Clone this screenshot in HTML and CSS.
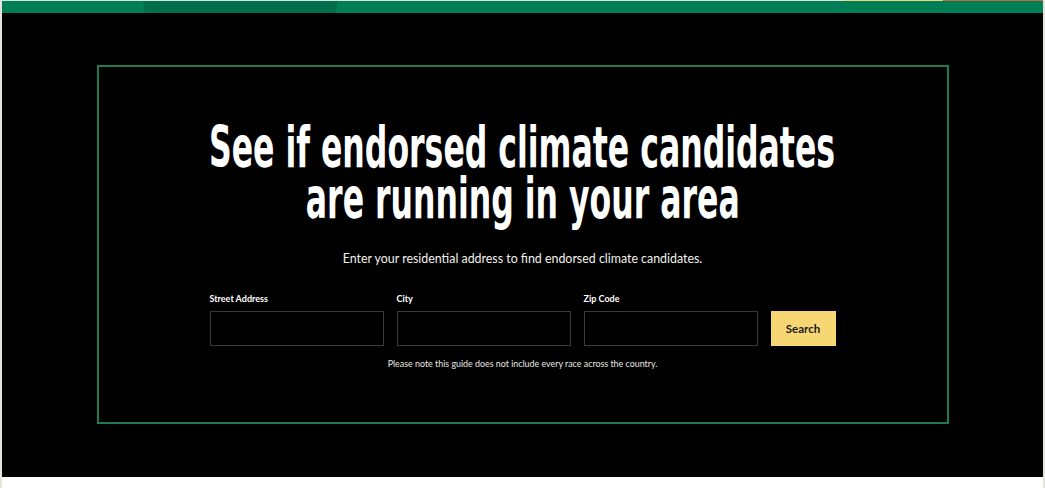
FILE: index.html
```html
<!DOCTYPE html>
<html lang="en">
<head>
  <meta charset="UTF-8" />
  <meta name="viewport" content="width=device-width, initial-scale=1.0" />
  <title>Find Climate Candidates</title>
  <link rel="stylesheet" href="styles.css">
</head>
<body>
  <div class="page">
    <!-- Top colour strip -->
    <div class="topline"></div>
    <div class="topbar">
      <span class="seg seg-a"></span>
      <span class="seg seg-b"></span>
      <span class="seg seg-c"></span>
    </div>

    <!-- Candidate lookup -->
    <section class="lookup">
      <div class="frame">
        <h1>
          <span class="line">See if endorsed climate candidates</span>
          <span class="line">are running in your area</span>
        </h1>
        <p class="intro">Enter your residential address to find endorsed climate candidates.</p>

        <form class="search-form" onsubmit="return false;">
          <div class="field">
            <label for="street">Street Address</label>
            <input type="text" id="street">
          </div>
          <div class="field">
            <label for="city">City</label>
            <input type="text" id="city">
          </div>
          <div class="field">
            <label for="zip">Zip Code</label>
            <input type="text" id="zip">
          </div>
          <button class="btn" type="submit">Search</button>
        </form>

        <p class="note">Please note this guide does not include every race across the country.</p>
      </div>
    </section>

    <div class="below"></div>
  </div>
</body>
</html>
```

FILE: styles.css
```css
/* Base */
body {
  margin: 0;
  padding: 0;
  background: #fff;
  font-family: 'Lato', 'Liberation Sans', sans-serif;
  color: #fff;
}
.page {
  border-left: 2px solid #e6e4da;
  border-right: 2px solid #e6e4da;
  min-height: 488px;
}

/* Top strip */
.topline {
  height: 1px;
  background: linear-gradient(to right, #d9e2dd 0, #d9e2dd 841px, #ecd77a 841px, #ecd77a 941px, #c8683c 941px);
}
.topbar {
  display: flex;
  height: 12px;
  background: #007f56;
}
.seg-a {
  width: 141px;
}
.seg-b {
  width: 195px;
  background: #006f4c;
  clip-path: polygon(0 0, 100% 0, 99% 100%, 1% 100%);
}
.seg-c {
  flex: 1;
}

/* Lookup section */
.lookup {
  background: #000;
  padding: 52px 0 53px;
}
.frame {
  width: 848px;
  height: 355px;
  margin: 0 auto;
  border: 2px solid #1d7a51;
  text-align: center;
}
h1 {
  display: flex;
  flex-direction: column;
  align-items: center;
  margin: 55px 0 0;
  font-family: 'DejaVu Sans', sans-serif;
  font-stretch: condensed;
  font-weight: bold;
  font-size: 57px;
  line-height: 51px;
  color: #fff;
}
.line {
  white-space: nowrap;
  transform: scaleX(0.615);
}
.intro {
  margin: 27px 0 0;
  font-size: 12.4px;
  color: #f2f2ec;
}

/* Form */
.search-form {
  display: grid;
  grid-template-columns: 174px 174px 174px 65px;
  column-gap: 13px;
  justify-content: center;
  align-items: end;
  margin-top: 27px;
}
.field {
  text-align: left;
}
label {
  display: block;
  font-size: 9px;
  font-weight: bold;
  margin-bottom: 7px;
}
input[type="text"] {
  display: block;
  width: 100%;
  height: 35px;
  box-sizing: border-box;
  background: #000;
  border: 1px solid #3a3a3a;
  color: #fff;
  padding: 0 8px;
}
.btn {
  height: 35px;
  background: #f7d774;
  color: #1a1a1a;
  border: none;
  font-family: 'Lato', 'Liberation Sans', sans-serif;
  font-weight: bold;
  font-size: 11.5px;
  cursor: pointer;
}
.note {
  margin: 12px 0 0;
  font-size: 8.9px;
  color: #e8e8e2;
}

.below {
  height: 11px;
  background: #fff;
}
```
